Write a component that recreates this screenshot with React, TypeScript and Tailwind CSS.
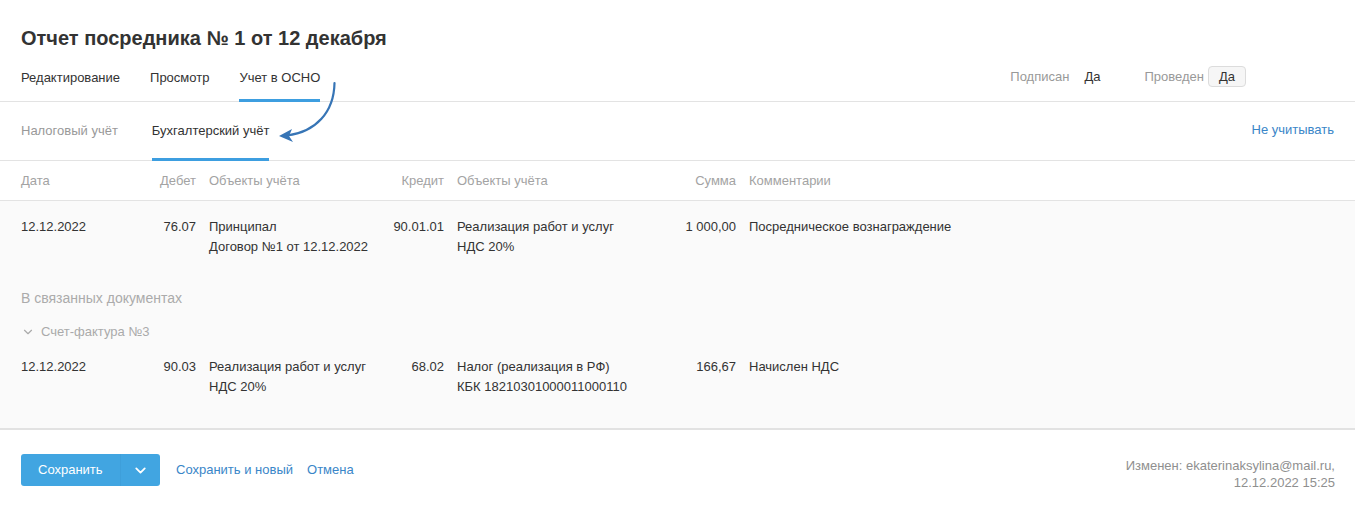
import { ChevronDown } from "lucide-react";

const font = { fontFamily: '"Liberation Sans", Arial, sans-serif' };

type Row = {
  date: string;
  debit: string;
  debitObj: string[];
  credit: string;
  creditObj: string[];
  sum: string;
  comment: string;
};

const mainRow: Row = {
  date: "12.12.2022",
  debit: "76.07",
  debitObj: ["Принципал", "Договор №1 от 12.12.2022"],
  credit: "90.01.01",
  creditObj: ["Реализация работ и услуг", "НДС 20%"],
  sum: "1 000,00",
  comment: "Посредническое вознаграждение",
};

const linkedRow: Row = {
  date: "12.12.2022",
  debit: "90.03",
  debitObj: ["Реализация работ и услуг", "НДС 20%"],
  credit: "68.02",
  creditObj: ["Налог (реализация в РФ)", "КБК 18210301000011000110"],
  sum: "166,67",
  comment: "Начислен НДС",
};

const grid =
  "grid grid-cols-[100px_62px_160px_62px_200px_66px_1fr] gap-x-[13px] px-[21px]";

function EntryRow({ row }: { row: Row }) {
  return (
    <div className={`${grid} text-[13px] leading-5 text-[#333]`}>
      <div>{row.date}</div>
      <div className="text-right">{row.debit}</div>
      <div>
        {row.debitObj.map((l) => (
          <div key={l}>{l}</div>
        ))}
      </div>
      <div className="text-right">{row.credit}</div>
      <div>
        {row.creditObj.map((l) => (
          <div key={l}>{l}</div>
        ))}
      </div>
      <div className="text-right">{row.sum}</div>
      <div>{row.comment}</div>
    </div>
  );
}

export default function App() {
  return (
    <div className="relative w-[1355px] h-[505px] bg-white overflow-hidden" style={font}>
      {/* Title */}
      <div className="px-[21px] pt-[26px]">
        <h1 className="text-[20px] leading-6 font-bold text-[#333]">
          Отчет посредника № 1 от 12 декабря
        </h1>
      </div>

      {/* Top tabs */}
      <div className="flex items-end justify-between border-b border-[#e3e3e3] px-[21px] pt-[19px]">
        <div className="flex gap-[30px] text-[13px] leading-[18px] text-[#333]">
          <div className="pb-[15px] -mb-px">Редактирование</div>
          <div className="pb-[15px] -mb-px">Просмотр</div>
          <div className="pb-3 -mb-px border-b-[3px] border-[#3d9ee0]">Учет в ОСНО</div>
        </div>
        <div className="flex items-center text-[13px] leading-[18px] mr-[88px] pb-[14px] -mt-2">
          <span className="text-[#999]">Подписан</span>
          <span className="ml-[15px] text-[#333]">Да</span>
          <span className="ml-[44px] text-[#999]">Проведен</span>
          <span className="ml-[4px] px-[10px] h-[21px] flex items-center rounded-[4px] border border-[#dcdcdc] bg-[#f6f6f6] text-[#333]">
            Да
          </span>
        </div>
      </div>

      {/* Sub tabs */}
      <div className="flex items-end justify-between border-b border-[#e3e3e3] px-[21px] pt-[19px]">
        <div className="flex gap-[34px] text-[13px] leading-[18px]">
          <div className="pb-[21px] -mb-px text-[#999]">Налоговый учёт</div>
          <div className="pb-[18px] -mb-px border-b-[3px] border-[#3d9ee0] text-[#333]">
            Бухгалтерский учёт
          </div>
        </div>
        <div className="pb-[21px] text-[13px] leading-[18px] text-[#3a86c8]">Не учитывать</div>
      </div>

      {/* Header */}
      <div className={`${grid} h-[40px] items-center text-[13px] text-[#a3a3a3] border-b border-[#e3e3e3]`}>
        <div>Дата</div>
        <div className="text-right">Дебет</div>
        <div>Объекты учёта</div>
        <div className="text-right">Кредит</div>
        <div>Объекты учёта</div>
        <div className="text-right">Сумма</div>
        <div>Комментарии</div>
      </div>

      {/* Body */}
      <div className="bg-[#fafafa] pt-4 pb-[31px] border-b-2 border-[#e2e2e2]">
        <EntryRow row={mainRow} />
        <div className="px-[21px] mt-[31px] text-[14px] leading-5 text-[#ababab]">
          В связанных документах
        </div>
        <div className="px-[21px] mt-[14px] flex items-center gap-[6px] text-[13px] leading-5 text-[#aaa]">
          <ChevronDown size={14} strokeWidth={2} className="text-[#aaa]" />
          <span>Счет-фактура №3</span>
        </div>
        <div className="mt-[15px]">
          <EntryRow row={linkedRow} />
        </div>
      </div>

      {/* Footer */}
      <div className="flex justify-between px-[20px] pt-6">
        <div className="flex items-center h-8">
          <div className="flex h-8 ml-px rounded-[3px] bg-[#41a5e1] text-white text-[13px]">
            <div className="w-[99px] flex items-center pl-[17px]">Сохранить</div>
            <div className="w-[40px] flex items-center justify-center border-l border-[#3e9fda]">
              <ChevronDown size={17} strokeWidth={2.5} />
            </div>
          </div>
          <span className="ml-4 text-[13px] text-[#3a86c8]">Сохранить и новый</span>
          <span className="ml-[14px] text-[13px] text-[#3a86c8]">Отмена</span>
        </div>
        <div className="text-right text-[13px] leading-[17px] text-[#8f8f8f] pt-[3px]">
          <div>Изменен: ekaterinaksylina@mail.ru,</div>
          <div>12.12.2022 15:25</div>
        </div>
      </div>

      {/* Annotation arrow */}
      <svg className="absolute left-0 top-0 pointer-events-none" width="1355" height="505">
        <path
          d="M334.5 83 C 334 112, 316 132, 287 135.5"
          fill="none"
          stroke="#3775b6"
          strokeWidth="2.2"
          strokeLinecap="round"
        />
        <path d="M279 136 L 292 129 L 289 136 L 293 142 Z" fill="#3775b6" />
      </svg>
    </div>
  );
}
